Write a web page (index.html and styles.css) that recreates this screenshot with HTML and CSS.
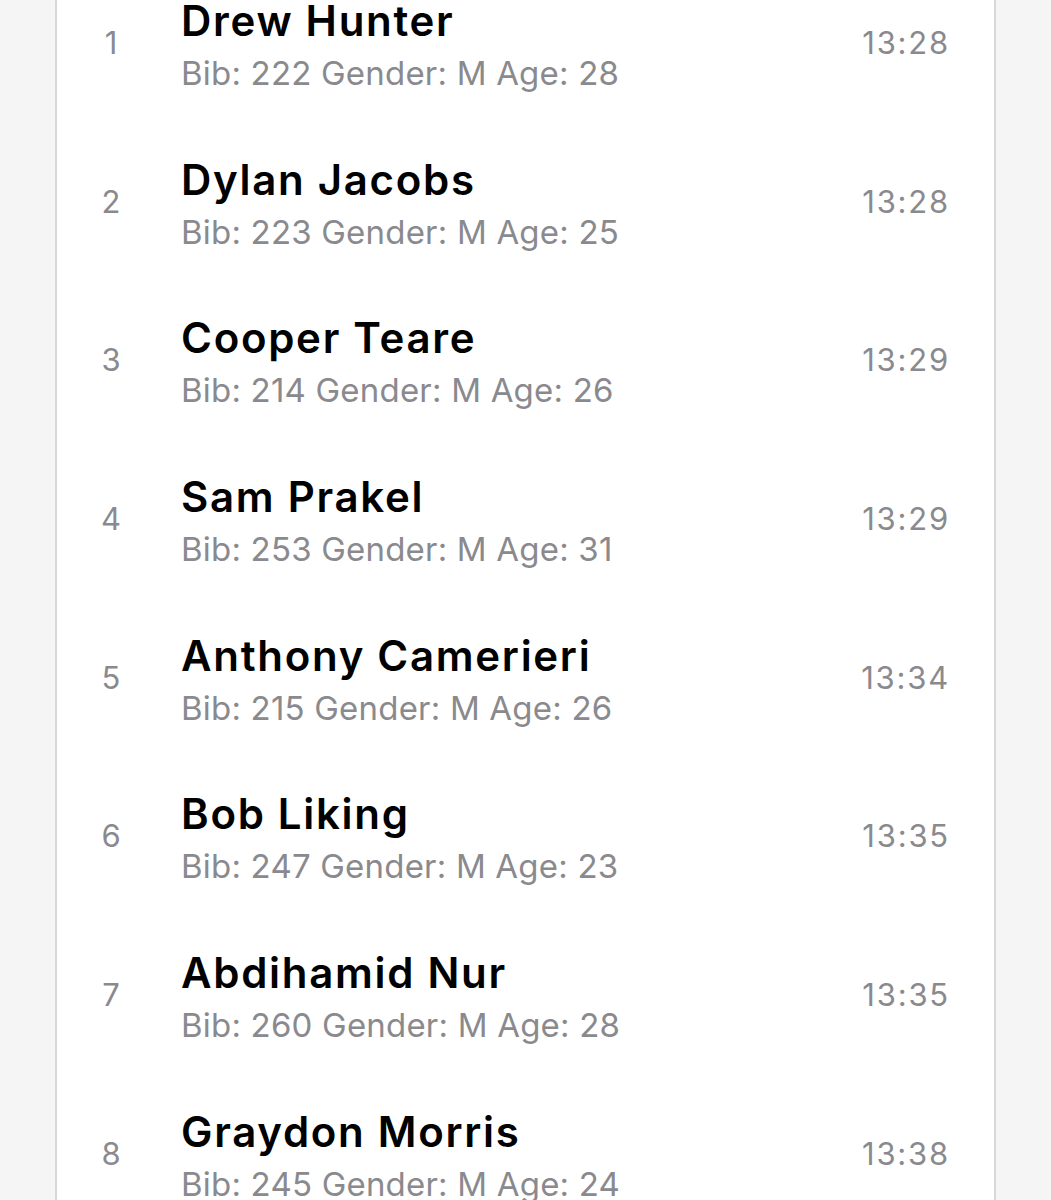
FILE: index.html
```html
<!DOCTYPE html>
<html lang="en">
<head>
    <meta charset="UTF-8">
    <meta name="viewport" content="width=device-width, initial-scale=1.0">
    <title>Results</title>
    <link rel="stylesheet" href="styles.css">
</head>
<body>
    <div class="results-card">
        <div class="result-row">
            <div class="place">1</div>
            <div class="runner">
                <div class="name">Drew Hunter</div>
                <div class="details">Bib: 222 Gender: M Age: 28</div>
            </div>
            <div class="time">13:28</div>
        </div>
        <div class="result-row">
            <div class="place">2</div>
            <div class="runner">
                <div class="name">Dylan Jacobs</div>
                <div class="details">Bib: 223 Gender: M Age: 25</div>
            </div>
            <div class="time">13:28</div>
        </div>
        <div class="result-row">
            <div class="place">3</div>
            <div class="runner">
                <div class="name">Cooper Teare</div>
                <div class="details">Bib: 214 Gender: M Age: 26</div>
            </div>
            <div class="time">13:29</div>
        </div>
        <div class="result-row">
            <div class="place">4</div>
            <div class="runner">
                <div class="name">Sam Prakel</div>
                <div class="details">Bib: 253 Gender: M Age: 31</div>
            </div>
            <div class="time">13:29</div>
        </div>
        <div class="result-row">
            <div class="place">5</div>
            <div class="runner">
                <div class="name">Anthony Camerieri</div>
                <div class="details">Bib: 215 Gender: M Age: 26</div>
            </div>
            <div class="time">13:34</div>
        </div>
        <div class="result-row">
            <div class="place">6</div>
            <div class="runner">
                <div class="name">Bob Liking</div>
                <div class="details">Bib: 247 Gender: M Age: 23</div>
            </div>
            <div class="time">13:35</div>
        </div>
        <div class="result-row">
            <div class="place">7</div>
            <div class="runner">
                <div class="name">Abdihamid Nur</div>
                <div class="details">Bib: 260 Gender: M Age: 28</div>
            </div>
            <div class="time">13:35</div>
        </div>
        <div class="result-row">
            <div class="place">8</div>
            <div class="runner">
                <div class="name">Graydon Morris</div>
                <div class="details">Bib: 245 Gender: M Age: 24</div>
            </div>
            <div class="time">13:38</div>
        </div>
    </div>
</body>
</html>
```

FILE: styles.css
```css
body {
    font-family: Inter, 'Noto Sans', Arial, sans-serif;
    margin: 0;
    padding: 0;
    background: #f5f5f5;
    color: #000;
    overflow: hidden;
}
.results-card {
    margin: -37px 0 0 55px;
    width: 937px;
    background: #fff;
    border-left: 2px solid #d8d8d8;
    border-right: 2px solid #d8d8d8;
}
.result-row {
    height: 158.7px;
    display: flex;
    align-items: center;
    padding: 0 44px 0 0;
}
.place {
    width: 124px;
    text-align: center;
    font-size: 31px;
    color: #8a8a8e;
    padding-right: 16px;
    box-sizing: border-box;
}
.runner {
    flex: 1;
    padding-top: 5px;
}
.name {
    font-size: 42px;
    font-weight: 600;
    line-height: 48px;
    letter-spacing: 1.7px;
}
.details {
    font-size: 33px;
    color: #8a8a8e;
    line-height: 40px;
    margin-top: 8px;
    letter-spacing: 0.2px;
}
.time {
    font-size: 31px;
    color: #8a8a8e;
    letter-spacing: 1.8px;
}
```
